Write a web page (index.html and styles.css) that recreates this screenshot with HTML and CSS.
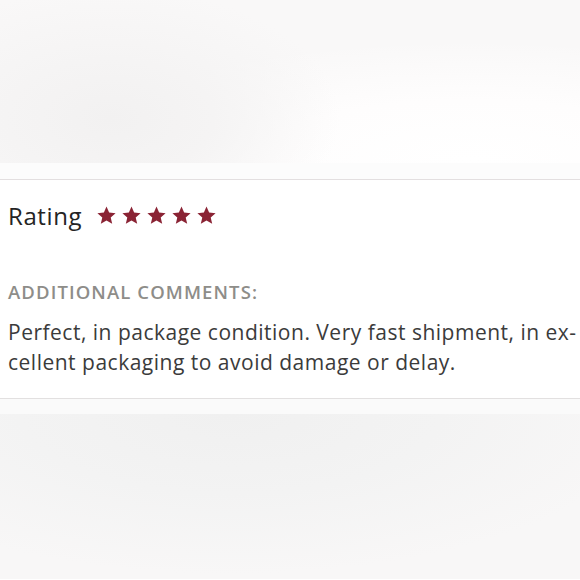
FILE: index.html
```html
<!DOCTYPE html>
<html>
<head>
<meta charset="utf-8">
<link rel="stylesheet" href="styles.css">
</head>
<body>
<div class="hero"></div>
<div class="spacer"></div>
<section class="card">
  <div class="rating">
    <span class="rating-label">Rating</span>
    <span class="stars">
      <svg class="star" viewBox="0 0 24 24"><path d="M12 1.8l3 6.9 7.4.6-5.6 4.9 1.7 7.3L12 17.6l-6.5 3.9 1.7-7.3-5.6-4.9 7.4-.6z"/></svg>
      <svg class="star" viewBox="0 0 24 24"><path d="M12 1.8l3 6.9 7.4.6-5.6 4.9 1.7 7.3L12 17.6l-6.5 3.9 1.7-7.3-5.6-4.9 7.4-.6z"/></svg>
      <svg class="star" viewBox="0 0 24 24"><path d="M12 1.8l3 6.9 7.4.6-5.6 4.9 1.7 7.3L12 17.6l-6.5 3.9 1.7-7.3-5.6-4.9 7.4-.6z"/></svg>
      <svg class="star" viewBox="0 0 24 24"><path d="M12 1.8l3 6.9 7.4.6-5.6 4.9 1.7 7.3L12 17.6l-6.5 3.9 1.7-7.3-5.6-4.9 7.4-.6z"/></svg>
      <svg class="star" viewBox="0 0 24 24"><path d="M12 1.8l3 6.9 7.4.6-5.6 4.9 1.7 7.3L12 17.6l-6.5 3.9 1.7-7.3-5.6-4.9 7.4-.6z"/></svg>
    </span>
  </div>
  <div class="label">ADDITIONAL COMMENTS:</div>
  <p class="comment">Perfect, in package condition. Very fast shipment, in ex-<br>cellent packaging to avoid damage or delay.</p>
</section>
<div class="spacer-bottom"></div>
<div class="footer-blur"></div>
</body>
</html>
```
FILE: styles.css
```css
html, body {
  margin: 0;
  padding: 0;
  background: #ffffff;
  font-family: "Open Sans", Lato, sans-serif;
}
.hero {
  height: 163px;
  background:
    radial-gradient(ellipse 230px 130px at 110px 118px, #f2f1f1 0%, #f5f4f4 45%, rgba(249,248,248,0) 100%),
    radial-gradient(ellipse 420px 120px at 470px 160px, #ffffff 0%, #fefdfd 50%, rgba(252,251,251,0) 100%),
    #f9f8f8;
}
.spacer {
  height: 16px;
  background: #fcfcfc;
}
.card {
  border-top: 1px solid #e3dfe0;
  border-bottom: 1px solid #e2e0e0;
  background: #ffffff;
  padding: 20px 0 21px 8px;
}
.rating {
  display: flex;
  align-items: center;
  height: 30px;
  gap: 14px;
}
.rating-label {
  font-size: 24px;
  letter-spacing: 0.6px;
  color: #242424;
}
.stars {
  display: flex;
  gap: 4px;
}
.star {
  width: 21px;
  height: 21px;
  fill: #8a2334;
}
.label {
  margin-top: 50px;
  font-size: 18.5px;
  line-height: 24px;
  color: #8e8d89;
  letter-spacing: 1.1px;
  font-weight: 600;
}
.comment {
  margin: 13px 0 0;
  font-size: 21px;
  line-height: 30px;
  letter-spacing: 0.5px;
  color: #3b3b3b;
  white-space: nowrap;
}
.spacer-bottom {
  height: 15px;
  background: #fafafa;
}
.footer-blur {
  height: 165px;
  background:
    radial-gradient(ellipse 420px 160px at 230px 0px, #f0f0f0 0%, #f3f3f3 50%, rgba(248,247,247,0) 100%),
    #f8f7f7;
}
```
